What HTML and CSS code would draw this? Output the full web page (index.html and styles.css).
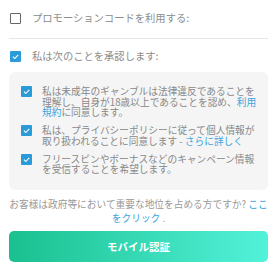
FILE: index.html
```html
<!DOCTYPE html>
<html lang="ja">
<head>
<meta charset="UTF-8">
<title>承認</title>
<link rel="stylesheet" href="styles.css">
</head>
<body>
<div class="form">
    <label class="row promo">
        <span class="box"></span>
        <span class="label">プロモーションコードを利用する:</span>
    </label>
    <div class="line"></div>
    <label class="row agree">
        <span class="box on"><svg viewBox="0 0 12 12"><path d="M3.2 6.2l2 2 3.8-4"/></svg></span>
        <span class="label">私は次のことを承認します:</span>
    </label>
    <div class="terms">
        <div class="item">
            <span class="box on"><svg viewBox="0 0 12 12"><path d="M3.2 6.2l2 2 3.8-4"/></svg></span>
            <p>私は未成年のギャンブルは法律違反であることを理解し、自身が18歳以上であることを認め、<a href="#">利用規約</a>に同意します。</p>
        </div>
        <div class="item">
            <span class="box on"><svg viewBox="0 0 12 12"><path d="M3.2 6.2l2 2 3.8-4"/></svg></span>
            <p>私は、プライバシーポリシーに従って個人情報が取り扱われることに同意します - <a href="#">さらに詳しく</a></p>
        </div>
        <div class="item">
            <span class="box on"><svg viewBox="0 0 12 12"><path d="M3.2 6.2l2 2 3.8-4"/></svg></span>
            <p>フリースピンやボーナスなどのキャンペーン情報を受信することを希望します。</p>
        </div>
    </div>
    <p class="pep">お客様は政府等において重要な地位を占める方ですか? <a href="#">ここをクリック</a> .</p>
    <button class="btn">モバイル認証</button>
</div>
</body>
</html>
```

FILE: styles.css
```css
*{
    margin: 0;
    padding: 0;
    box-sizing: border-box;
}
body{
    font-family: "Noto Sans CJK JP", "Noto Sans", sans-serif;
    color: #8c8c8c;
    background: #fff;
}
.form{
    width: 259px;
    margin-left: 9px;
    padding-top: 12px;
}
.row{
    display: flex;
    align-items: center;
    gap: 11px;
    padding-left: 1px;
    font-size: 10.3px;
    line-height: 12px;
}
.promo{
    padding-bottom: 14px;
}
.line{
    height: 1px;
    background: #e6e6e6;
}
.agree{
    padding-top: 11px;
}
.box{
    flex: none;
    width: 11px;
    height: 11px;
    border: 1.5px solid #666;
    border-radius: 1px;
}
.box.on{
    background: #2a9ad8;
    border: none;
    display: flex;
    align-items: center;
    justify-content: center;
}
.box svg{
    width: 11px;
    height: 11px;
    fill: none;
    stroke: #fff;
    stroke-width: 1.2;
}
.terms{
    margin-top: 10px;
    background: #f5f5f5;
    border-radius: 6px;
    padding: 14px 10px 15px 12px;
}
.item{
    display: flex;
    gap: 10px;
    margin-bottom: 7.5px;
}
.item:last-child{
    margin-bottom: 0;
}
.item p{
    font-size: 9.7px;
    line-height: 10.5px;
    color: #888;
}
a{
    color: #3aa3dd;
    text-decoration: none;
}
.pep{
    margin-top: 7px;
    text-align: center;
    font-size: 9.7px;
    line-height: 14px;
    color: #999;
}
.btn{
    display: block;
    width: 100%;
    height: 31px;
    margin-top: 6px;
    border: none;
    border-radius: 5px;
    background: linear-gradient(90deg, #1ac08f, #52f2da);
    color: #fff;
    font-family: "Noto Sans CJK JP", sans-serif;
    font-weight: bold;
    font-size: 10.5px;
}
```
